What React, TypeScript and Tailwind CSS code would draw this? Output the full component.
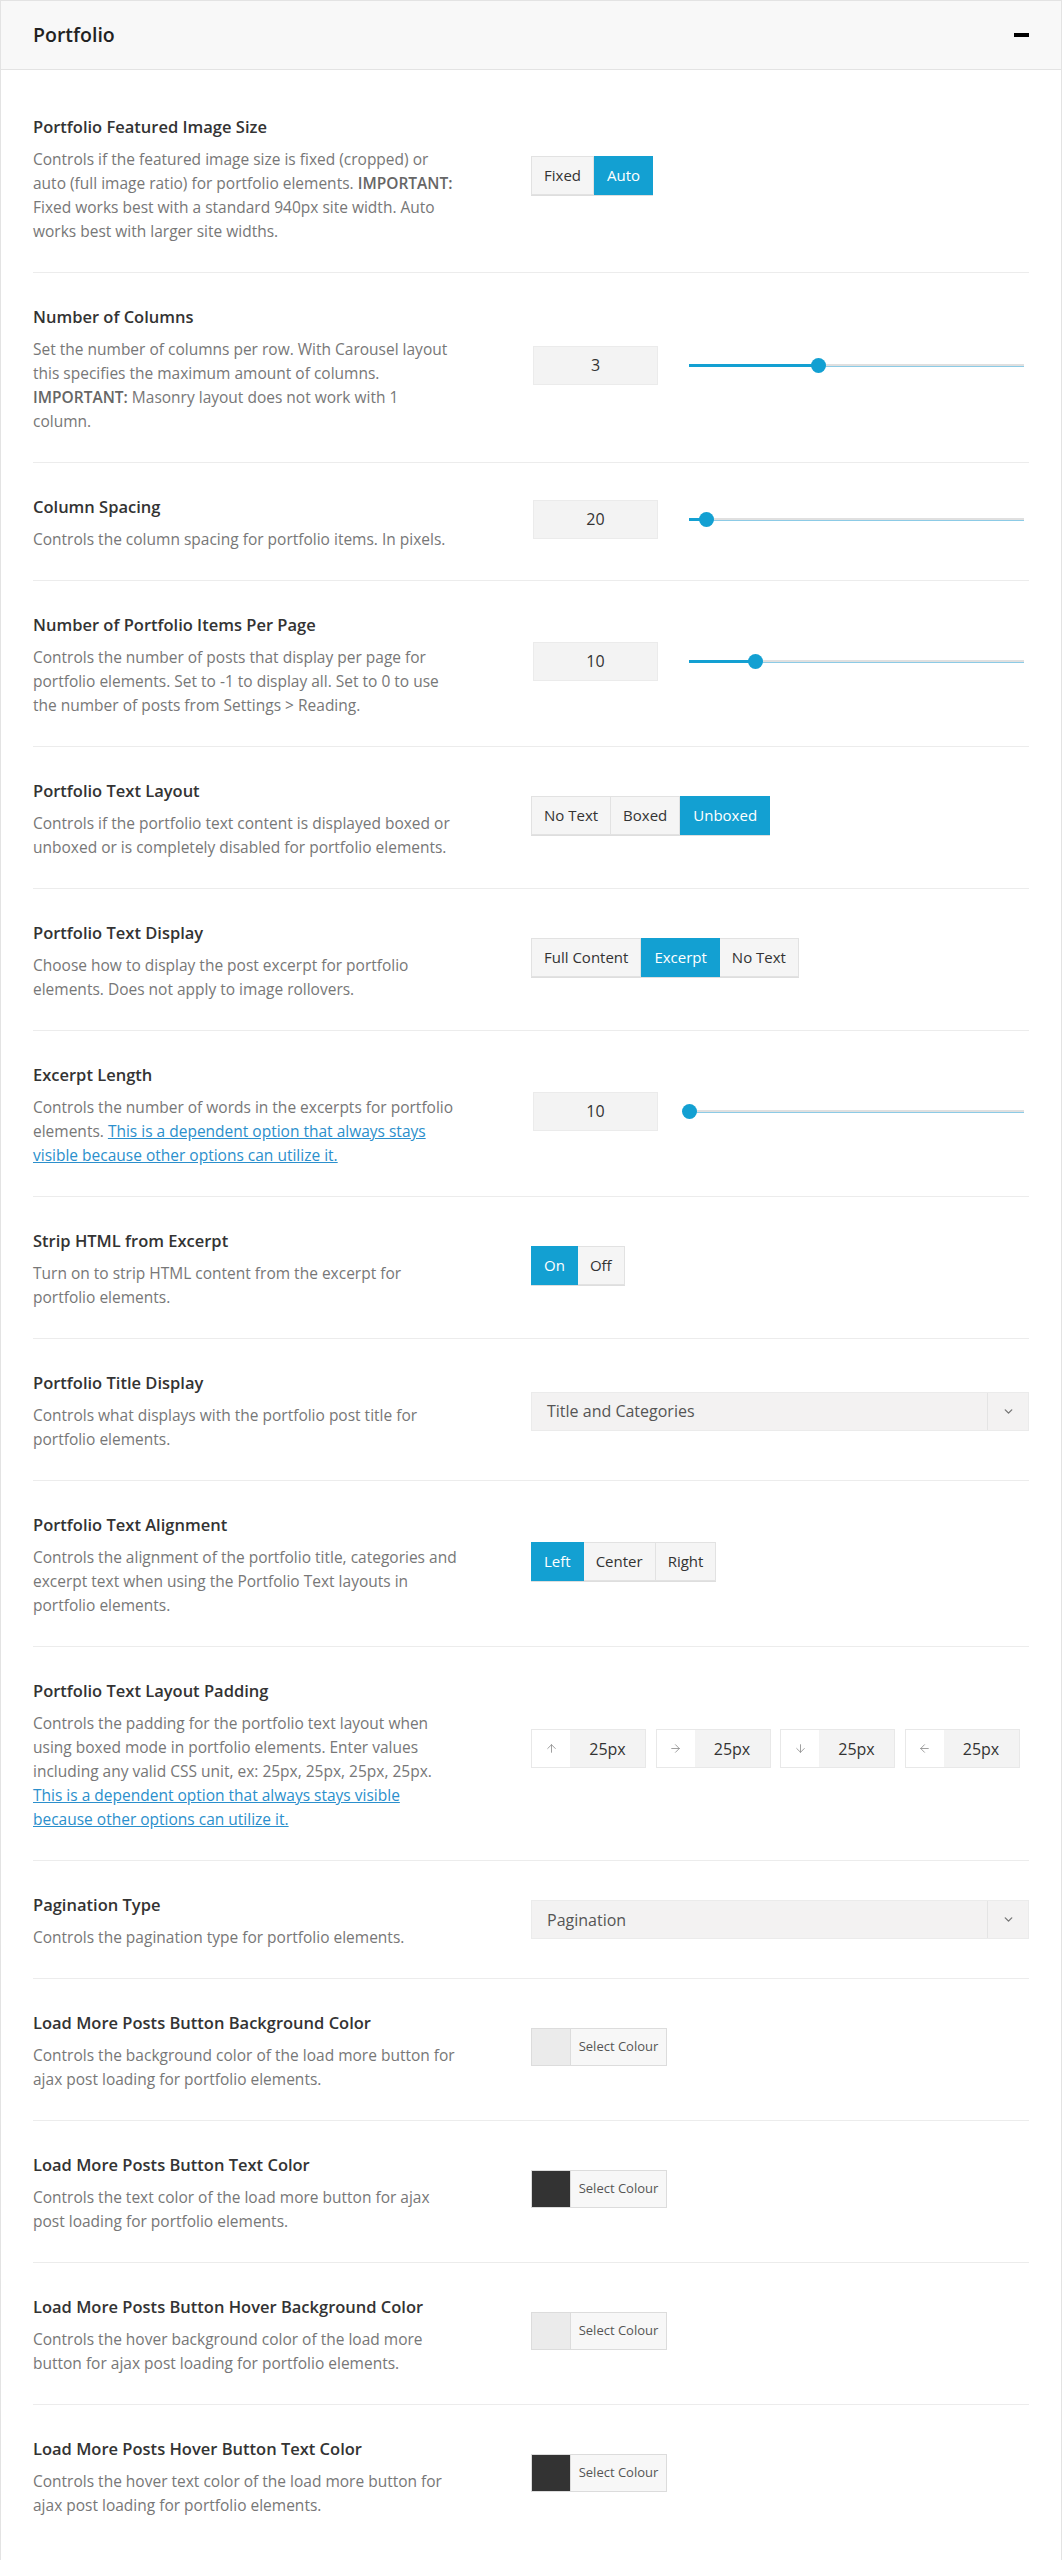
import { ReactNode } from "react";
import { ArrowUp, ArrowRight, ArrowDown, ArrowLeft, ChevronDown } from "lucide-react";

const link = "This is a dependent option that always stays visible because other options can utilize it.";

const ButtonSet = ({ options, active }: { options: string[]; active: string }) => (
  <div className="inline-flex shadow-[0_1px_0_#dedede]">
    {options.map((o, i) => (
      <span
        key={o}
        className={
          o === active
            ? "h-[39px] px-[12px] flex items-center text-[15px] text-white bg-[#13a0d2] border border-[#13a0d2]"
            : `h-[39px] px-[12px] flex items-center text-[15px] text-[#333] bg-[#f5f5f5] border border-[#e2e2e2] ${i > 0 ? "border-l-0" : ""}`
        }
      >
        {o}
      </span>
    ))}
  </div>
);

const Slider = ({ value, pos }: { value: string; pos: number }) => (
  <div className="flex items-center">
    <div className="ml-[2px] w-[125px] h-[39px] bg-[#f3f3f3] border border-[#ebebeb] flex items-center justify-center text-[16px] text-[#333]">
      {value}
    </div>
    <div className="relative ml-[31px] w-[335px] h-[15px] flex items-center">
      <div className="w-full h-[3px] bg-[#e0e0e0] border-b border-[#8ccbe6]" />
      <div className="absolute left-0 h-[3px] bg-[#13a0d2]" style={{ width: `${pos * 100}%` }} />
      <div
        className="absolute w-[15px] h-[15px] -ml-[7px] rounded-full bg-[#13a0d2]"
        style={{ left: `${pos * 100}%` }}
      />
    </div>
  </div>
);

const Select = ({ value }: { value: string }) => (
  <div className="w-full h-[39px] bg-[#f3f2f2] border border-[#ebebeb] flex items-center">
    <span className="flex-1 pl-[15px] text-[16px] text-[#555]">{value}</span>
    <span className="w-[41px] h-full border-l border-[#e4e4e4] flex items-center justify-center">
      <ChevronDown size={13} strokeWidth={2.5} className="text-[#777]" />
    </span>
  </div>
);

const PaddingInputs = () => {
  const icons = [ArrowUp, ArrowRight, ArrowDown, ArrowLeft];
  return (
    <div className="flex gap-[9.5px]">
      {icons.map((Icon, i) => (
        <div key={i} className="w-[115px] h-[39px] border border-[#e8e8e8] flex">
          <span className="w-[38px] bg-white flex items-center justify-center">
            <Icon size={13} strokeWidth={1.5} className="text-[#8a8a8a]" />
          </span>
          <span className="flex-1 bg-[#f3f3f3] flex items-center justify-center text-[16px] text-[#333]">
            25px
          </span>
        </div>
      ))}
    </div>
  );
};

const ColorPicker = ({ color }: { color: string }) => (
  <div className="w-[136px] h-[38px] border border-[#dcdcdc] flex">
    <span className="w-[39px] border-r border-[#dcdcdc]" style={{ background: color }} />
    <span className="flex-1 bg-[#f7f7f7] flex items-center justify-center text-[13px] text-[#555]">
      Select Colour
    </span>
  </div>
);

const Row = ({
  title,
  children,
  control,
  last,
  lift = 10,
}: {
  title: string;
  children: ReactNode;
  control: ReactNode;
  last?: boolean;
  lift?: number;
}) => (
  <div className={`flex items-center pt-[34px] pb-[29px] ${last ? "" : "border-b border-[#ececec]"}`}>
    <div className="w-[498px] shrink-0 pr-[71.5px]">
      <h3 className="text-[16.5px] leading-[20px] font-semibold text-[#333] mb-[10px]">{title}</h3>
      <p className="text-[15.5px] leading-[24px] text-[#777]">{children}</p>
    </div>
    <div className="flex-1" style={{ marginBottom: lift }}>
      {control}
    </div>
  </div>
);

const Dep = () => <a className="text-[#2b8fcc] underline">{link}</a>;

export default function App() {
  return (
    <div className="bg-white font-['Open_Sans',sans-serif]">
      <div className="border border-[#e3e3e3]">
        <div className="h-[69px] bg-[#f8f8f8] border-b border-[#e3e3e3] px-[32px] flex items-center justify-between">
          <h2 className="text-[19.5px] font-semibold text-[#222]">Portfolio</h2>
          <span className="w-[15px] h-[4px] bg-black" />
        </div>

        <div className="px-[32px] pt-[13px] pb-[16px]">
          <Row
            title="Portfolio Featured Image Size"
            control={<ButtonSet options={["Fixed", "Auto"]} active="Auto" />}
          >
            Controls if the featured image size is fixed (cropped) or auto (full image ratio) for portfolio elements.{" "}
            <b className="font-semibold text-[#666]">IMPORTANT:</b> Fixed works best with a standard 940px site width.
            Auto works best with larger site widths.
          </Row>

          <Row title="Number of Columns" control={<Slider value="3" pos={0.384} />}>
            Set the number of columns per row. With Carousel layout this specifies the maximum amount of columns.{" "}
            <b className="font-semibold text-[#666]">IMPORTANT:</b> Masonry layout does not work with 1 column.
          </Row>

          <Row title="Column Spacing" control={<Slider value="20" pos={0.05} />}>
            Controls the column spacing for portfolio items. In pixels.
          </Row>

          <Row title="Number of Portfolio Items Per Page" control={<Slider value="10" pos={0.197} />}>
            Controls the number of posts that display per page for portfolio elements. Set to -1 to display all. Set to
            0 to use the number of posts from Settings &gt; Reading.
          </Row>

          <Row
            title="Portfolio Text Layout"
            control={<ButtonSet options={["No Text", "Boxed", "Unboxed"]} active="Unboxed" />}
          >
            Controls if the portfolio text content is displayed boxed or unboxed or is completely disabled for portfolio
            elements.
          </Row>

          <Row
            title="Portfolio Text Display"
            control={<ButtonSet options={["Full Content", "Excerpt", "No Text"]} active="Excerpt" />}
          >
            Choose how to display the post excerpt for portfolio elements. Does not apply to image rollovers.
          </Row>

          <Row title="Excerpt Length" control={<Slider value="10" pos={0} />}>
            Controls the number of words in the excerpts for portfolio elements. <Dep />
          </Row>

          <Row title="Strip HTML from Excerpt" control={<ButtonSet options={["On", "Off"]} active="On" />}>
            Turn on to strip HTML content from the excerpt for portfolio elements.
          </Row>

          <Row title="Portfolio Title Display" control={<Select value="Title and Categories" />} lift={2}>
            Controls what displays with the portfolio post title for portfolio elements.
          </Row>

          <Row
            title="Portfolio Text Alignment"
            control={<ButtonSet options={["Left", "Center", "Right"]} active="Left" />}
          >
            Controls the alignment of the portfolio title, categories and excerpt text when using the Portfolio Text
            layouts in portfolio elements.
          </Row>

          <Row title="Portfolio Text Layout Padding" control={<PaddingInputs />} lift={15}>
            Controls the padding for the portfolio text layout when using boxed mode in portfolio elements. Enter values
            including any valid CSS unit, ex: 25px, 25px, 25px, 25px. <Dep />
          </Row>

          <Row title="Pagination Type" control={<Select value="Pagination" />} lift={5}>
            Controls the pagination type for portfolio elements.
          </Row>

          <Row title="Load More Posts Button Background Color" control={<ColorPicker color="#ebebeb" />}>
            Controls the background color of the load more button for ajax post loading for portfolio elements.
          </Row>

          <Row title="Load More Posts Button Text Color" control={<ColorPicker color="#333333" />}>
            Controls the text color of the load more button for ajax post loading for portfolio elements.
          </Row>

          <Row title="Load More Posts Button Hover Background Color" control={<ColorPicker color="#ebebeb" />}>
            Controls the hover background color of the load more button for ajax post loading for portfolio elements.
          </Row>

          <Row title="Load More Posts Hover Button Text Color" control={<ColorPicker color="#333333" />} last>
            Controls the hover text color of the load more button for ajax post loading for portfolio elements.
          </Row>
        </div>
      </div>
    </div>
  );
}
